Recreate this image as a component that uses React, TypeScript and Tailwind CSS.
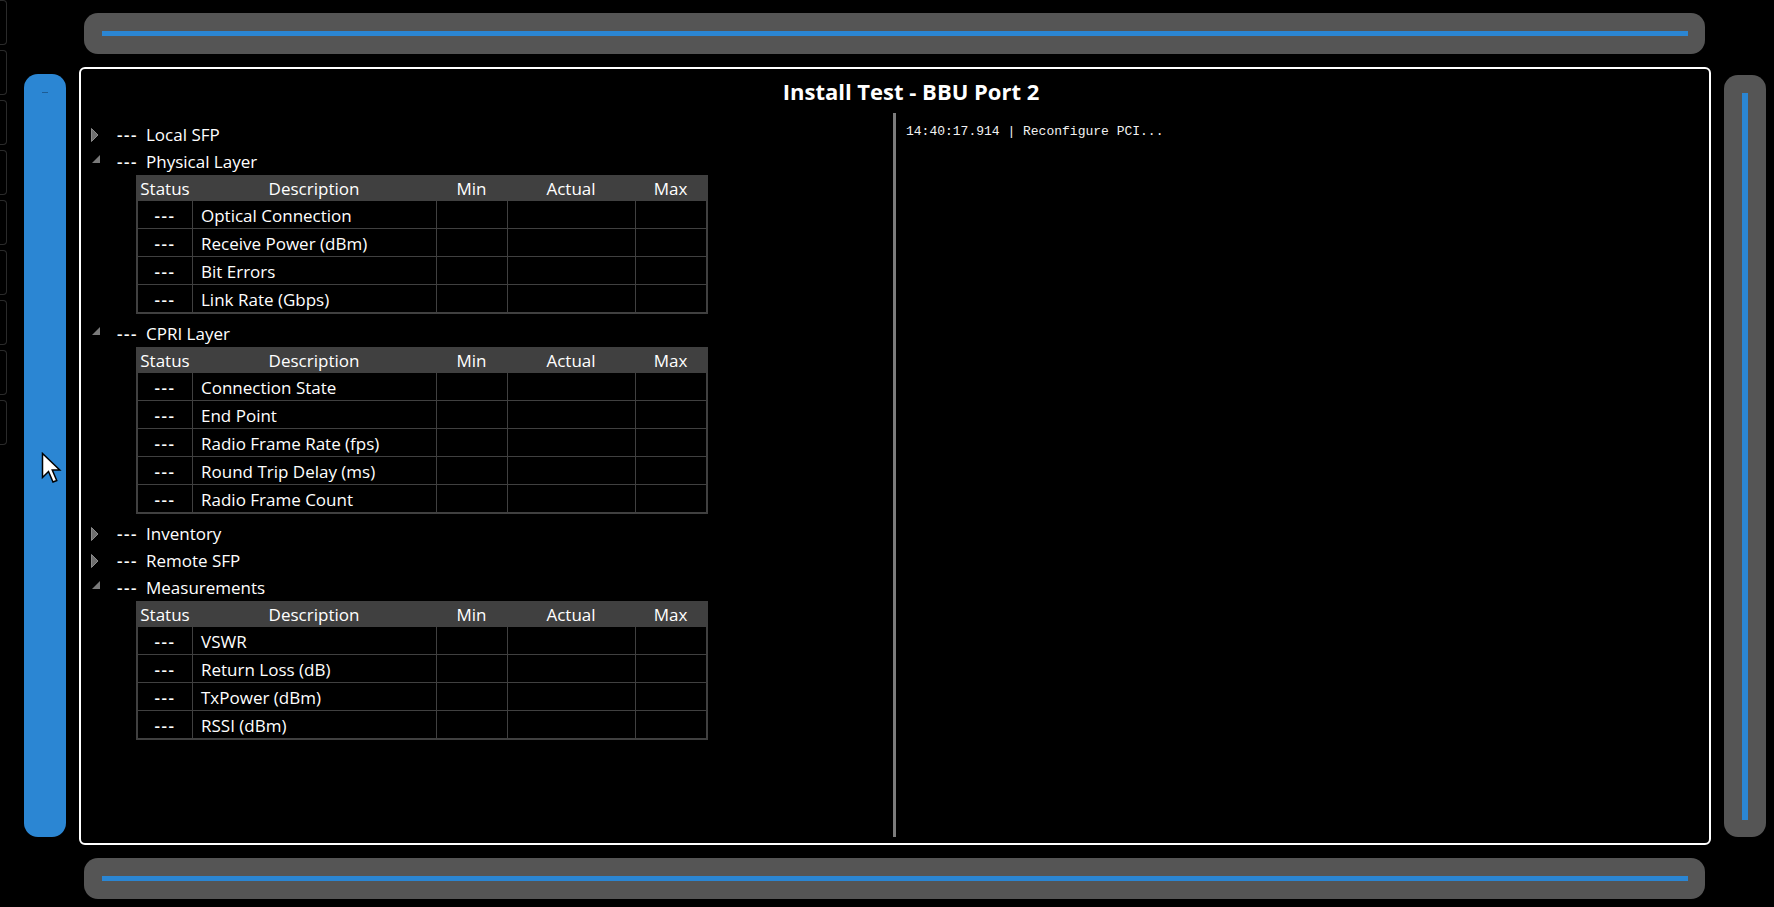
type Section = {
    label: string;
    open: boolean;
    rows?: string[];
};

const SECTIONS: Section[] = [
    {label: 'Local SFP', open: false},
    {
        label: 'Physical Layer',
        open: true,
        rows: ['Optical Connection', 'Receive Power (dBm)', 'Bit Errors', 'Link Rate (Gbps)'],
    },
    {
        label: 'CPRI Layer',
        open: true,
        rows: ['Connection State', 'End Point', 'Radio Frame Rate (fps)', 'Round Trip Delay (ms)', 'Radio Frame Count'],
    },
    {label: 'Inventory', open: false},
    {label: 'Remote SFP', open: false},
    {
        label: 'Measurements',
        open: true,
        rows: ['VSWR', 'Return Loss (dB)', 'TxPower (dBm)', 'RSSI (dBm)'],
    },
];

const COLS = 'grid grid-cols-[54px_244px_71px_128px_71px]';

function Expander({open}: {open: boolean}) {
    if (open) {
        return (
            <svg width="10" height="10" viewBox="0 0 10 10" className="mt-[-6px]">
                <polygon points="9,1 9,9 1,9" fill="#7a7a7a" />
            </svg>
        );
    }
    return (
        <svg width="8" height="14" viewBox="0 0 8 14">
            <polygon points="0.5,0.5 7,7 0.5,13.5" fill="#6e6e6e" stroke="#8a8a8a" strokeWidth="1" />
        </svg>
    );
}

function Dashes() {
    return <span className="font-semibold tracking-[1.5px]">---</span>;
}

function ResultTable({rows}: {rows: string[]}) {
    return (
        <div className="ml-[45px] w-[572px] border-2 border-[#404040]">
            <div className={`${COLS} h-[23px] bg-[#404040] items-center`}>
                <div className="text-center">Status</div>
                <div className="text-center">Description</div>
                <div className="text-center">Min</div>
                <div className="text-center">Actual</div>
                <div className="text-center">Max</div>
            </div>
            {rows.map((r) => (
                <div key={r} className={`${COLS} h-[28px] border-t border-[#404040]`}>
                    <div className="flex items-center justify-center pt-[2px]">
                        <Dashes />
                    </div>
                    <div className="flex items-center pl-[8px] pt-[2px] border-l border-[#404040]">{r}</div>
                    <div className="border-l border-[#404040]"></div>
                    <div className="border-l border-[#404040]"></div>
                    <div className="border-l border-[#404040]"></div>
                </div>
            ))}
        </div>
    );
}

function TreeRow({section}: {section: Section}) {
    return (
        <div className="flex h-[27px] items-center">
            <div className="w-[26px] flex items-center">
                <Expander open={section.open} />
            </div>
            <div className="w-[29px]">
                <Dashes />
            </div>
            <div>{section.label}</div>
        </div>
    );
}

function EdgeButtons() {
    return (
        <div className="flex flex-col gap-[5px] w-[7px] shrink-0">
            {Array.from({length: 9}).map((_, i) => (
                <div key={i} className="h-[45px] w-[7px] border border-l-0 border-[#2a2a2a] rounded-r-[4px]"></div>
            ))}
        </div>
    );
}

function HBar() {
    return (
        <div className="h-[41px] mx-[5px] mr-[6px] bg-[#555555] rounded-[14px] flex items-center pl-[18px] pr-[17px]">
            <div className="h-[5px] w-full bg-[#2b86d3]"></div>
        </div>
    );
}

export default function App() {
    return (
        <div
            className="relative w-[1774px] h-[907px] bg-black overflow-hidden flex items-start text-white"
            style={{fontFamily: '"Open Sans", "Liberation Sans", sans-serif'}}
        >
            <EdgeButtons />

            {/* left slider */}
            <div className="ml-[17px] mt-[74px] w-[42px] h-[763px] bg-[#2b86d3] rounded-[14px] shrink-0 flex justify-center pt-[18px]">
                <div className="w-[6px] h-px bg-[#1d5c94]"></div>
            </div>

            {/* center column */}
            <div className="ml-[13px] w-[1632px] shrink-0 flex flex-col pt-[13px]">
                <HBar />

                <div className="mt-[13px] h-[778px] border-2 border-white rounded-[6px] flex flex-col pb-[6px]">
                    <div className="h-[44px] flex items-center justify-center pl-[32px] text-[22px] font-bold">
                        Install Test - BBU Port 2
                    </div>
                    <div className="flex flex-1 min-h-0">
                        <div className="w-[812px] pl-[10px] pt-[8px] text-[17px] leading-none">
                            {SECTIONS.map((s, i) => (
                                <div key={s.label} className={i > 0 && SECTIONS[i - 1].rows ? 'mt-[6px]' : ''}>
                                    <TreeRow section={s} />
                                    {s.rows && <ResultTable rows={s.rows} />}
                                </div>
                            ))}
                        </div>
                        <div className="w-[3px] bg-[#7c7c7c]"></div>
                        <div className="flex-1 pl-[10px] pt-[11px]">
                            <div
                                className="text-[13px] leading-[16px] text-[#f2f2f2]"
                                style={{fontFamily: '"Liberation Mono", monospace'}}
                            >
                                14:40:17.914 | Reconfigure PCI...
                            </div>
                        </div>
                    </div>
                </div>

                <div className="mt-[13px]">
                    <HBar />
                </div>
            </div>

            {/* right slider */}
            <div className="ml-[13px] mt-[75px] w-[42px] h-[762px] bg-[#555555] rounded-[14px] shrink-0 flex justify-center pt-[18px] pb-[17px]">
                <div className="w-[6px] h-full bg-[#2b86d3]"></div>
            </div>

            {/* mouse pointer */}
            <svg className="absolute left-[41px] top-[452px]" width="21" height="33" viewBox="0 0 14 22">
                <path d="M1 1 L1 17 L5 13 L8 20 L10.5 19 L7.5 12 L12.5 12 Z" fill="white" stroke="black" strokeWidth="1" strokeLinejoin="miter" />
            </svg>
        </div>
    );
}
